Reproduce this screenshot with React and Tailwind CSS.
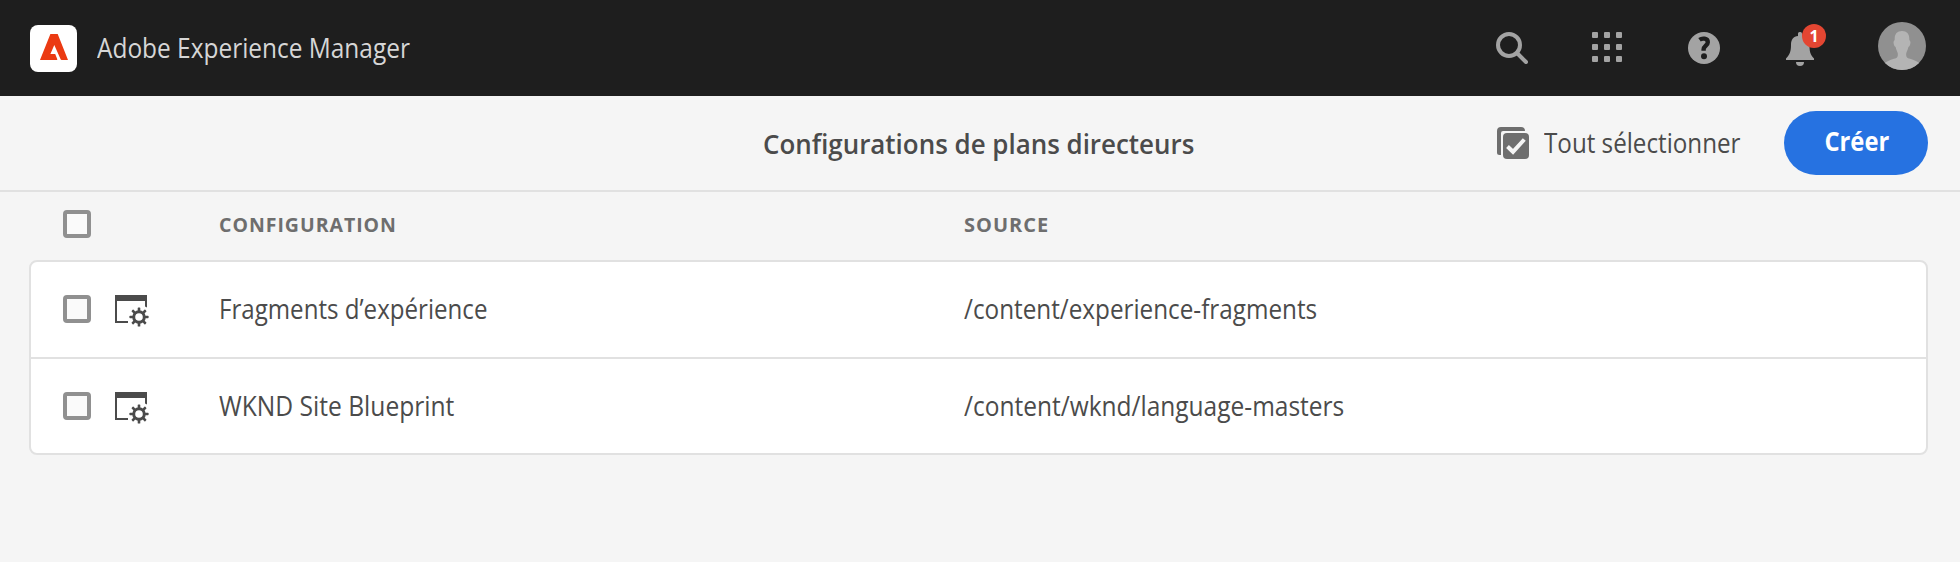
const rows = [
  { name: 'Fragments d’expérience', nameScale: 'scale-x-[0.893]', source: '/content/experience-fragments', sourceScale: 'scale-x-[0.899]' },
  { name: 'WKND Site Blueprint', nameScale: 'scale-x-[0.911]', source: '/content/wknd/language-masters', sourceScale: 'scale-x-[0.907]' },
];

function AdobeLogo() {
  return (
    <div className="flex h-[47px] w-[47px] shrink-0 items-center justify-center rounded-lg bg-white">
      <svg width="28" height="26" viewBox="0 0 28 26" fill="#eb3a12" className="-translate-y-px">
        <path d="M10.4 0h7.3L28 26h-6.3c-.6 0-.9-.2-1.1-.7L14.3 10.9 10.4 20h4.8l2.1 5.3c.1.4 0 .7-.5.7H0Z" />
      </svg>
    </div>
  );
}

function SearchIcon() {
  return (
    <svg width="32" height="32" viewBox="0 0 32 32" fill="none" stroke="#a3a3a3">
      <circle cx="13" cy="13" r="11" strokeWidth="4" />
      <path d="M21 21l9 9" strokeWidth="4" strokeLinecap="round" />
    </svg>
  );
}

function AppsIcon() {
  return (
    <svg width="30" height="30" viewBox="0 0 30 30" fill="#a3a3a3">
      {[0, 12, 24].map((y) => [0, 12, 24].map((x) => <rect key={`${x}-${y}`} x={x} y={y} width="6" height="6" rx="1" />))}
    </svg>
  );
}

function HelpIcon() {
  return (
    <svg width="32" height="32" viewBox="0 0 32 32">
      <circle cx="16" cy="16" r="16" fill="#a3a3a3" />
      <path d="M11.500 7.700C14 6 19.800 5.900 19.800 10.200c0 3.300-4.200 3.600-4.200 7.300v1.200" fill="none" stroke="#1e1e1e" strokeWidth="4.400" />
      <circle cx="16" cy="24.200" r="3" fill="#1e1e1e" />
    </svg>
  );
}

function BellIcon() {
  return (
    <svg width="28" height="34" viewBox="0 0 28 34" fill="#a3a3a3">
      <path d="M12 4V1.500A1.500 1.500 0 0 1 13.500 0h1A1.500 1.500 0 0 1 16 1.500V4c4.500.5 7.500 3.500 7.500 8.500 0 7 .5 9.500 4.500 14V28H0v-1.500c4-4.500 5-7 5-14C5 7.500 7.500 4.500 12 4Z" />
      <path d="M10 30h8a4 4 0 0 1-8 0Z" />
    </svg>
  );
}

function Avatar() {
  return (
    <svg width="48" height="48" viewBox="0 0 48 48">
      <defs><clipPath id="avatar"><circle cx="24" cy="24" r="24" /></clipPath></defs>
      <g clipPath="url(#avatar)">
        <rect width="48" height="48" fill="#909090" />
        <path d="M24 9c-5 0-7.500 3-7.300 8.500-.1 1.200-1.500 1.600-1.100 3.700.4 2.200 1 3 2 3.700.6 3.200 1.900 4.700 2.200 6.500.2 1.800 0 3.600-1.400 4.600C15.500 37 11 38 6 41.500v8h36v-8c-5-3.500-9.500-4.500-12.400-5.500-1.400-1-1.600-2.800-1.400-4.600.3-1.800 1.600-3.300 2.200-6.500 1-.7 1.600-1.500 2-3.700.4-2.100-1-2.500-1.100-3.700C31.500 12 29 9 24 9Z" fill="#b4b4b4" />
      </g>
    </svg>
  );
}

function SelectAllIcon() {
  return (
    <svg width="32" height="32" viewBox="0 0 32 32" fill="#6e6e6e">
      <path d="M4 28H2.500A2.500 2.500 0 0 1 0 25.500V4a4 4 0 0 1 4-4h20a4 4 0 0 1 4 4H6a2 2 0 0 0-2 2Z" />
      <rect x="6" y="6" width="26" height="26" rx="4" />
      <path d="M10.500 19.500l5.500 5.300L27.300 12.500" fill="none" stroke="#f5f5f5" strokeWidth="4" />
    </svg>
  );
}

function BlueprintIcon() {
  return (
    <svg width="34" height="32" viewBox="0 0 34 32" fill="#4b4b4b">
      <path d="M0 0h32v12.500l-2-1V6H2v20h11v2H0Z" />
      <circle cx="24" cy="22" r="5.300" fill="none" stroke="#4b4b4b" strokeWidth="3" />
      {[0, 45, 90, 135, 180, 225, 270, 315].map((a) => (
        <rect key={a} x="22.700" y="12.400" width="2.600" height="4" rx="0.700" transform={`rotate(${a} 24 22)`} />
      ))}
    </svg>
  );
}

function Checkbox() {
  return <span role="checkbox" aria-checked="false" className="block h-7 w-7 shrink-0 rounded border-4 border-[#909090] bg-[#fafafa]" />;
}

export default function App() {
  return (
    <div className="h-[562px] w-[1960px] overflow-hidden bg-[#f5f5f5] font-['Open_Sans',sans-serif] text-[27px] leading-9 whitespace-nowrap text-[#4b4b4b]">
      <header className="flex h-24 items-center justify-between bg-[#1e1e1e] pr-[34px] pl-[30px]">
        <div className="flex items-center gap-[20px]">
          <AdobeLogo />
          <span className="origin-left scale-x-[0.905] text-[#d6d6d6]">Adobe Experience Manager</span>
        </div>
        <div className="flex h-24 items-start">
          <div className="mt-8 mr-16"><SearchIcon /></div>
          <div className="mt-8 mr-[66px]"><AppsIcon /></div>
          <div className="mt-8 mr-[66px]"><HelpIcon /></div>
          <div className="relative mt-8 mr-16">
            <BellIcon />
            <span className="absolute -top-2 left-4 flex h-6 w-6 items-center justify-center rounded-full bg-[#e34632] text-[16px] leading-6 font-bold text-white">1</span>
          </div>
          <div className="mt-[22px]"><Avatar /></div>
        </div>
      </header>

      <div className="grid h-24 grid-cols-[1fr_434px_1fr] items-center border-b-2 border-[#e1e1e1] pr-8 pl-8">
        <div />
        <h1 className="mt-px origin-left scale-x-[0.96] font-semibold">Configurations de plans directeurs</h1>
        <div className="flex items-center justify-end">
          <SelectAllIcon />
          <span className="ml-[15px] w-60"><span className="inline-block origin-left scale-x-[0.896]">Tout sélectionner</span></span>
          <button className="flex h-16 w-36 items-center justify-center rounded-full bg-[#2672e1] pb-1 pl-0.5 font-bold text-white">
            <span className="scale-x-[0.88]">Créer</span>
          </button>
        </div>
      </div>

      <main className="pr-8 pl-[29px]">
        <div className="flex h-[68px] items-start pt-[18px] pl-[34px] text-xl leading-7 font-bold text-[#6e6e6e]">
          <div className="w-[156px]"><Checkbox /></div>
          <div className="mt-px w-[745px]"><span className="inline-block origin-left scale-x-[0.975] tracking-[1px]">CONFIGURATION</span></div>
          <div className="mt-px tracking-[1px]">SOURCE</div>
        </div>
        <div className="rounded-lg border-2 border-[#e1e1e1] bg-white">
          {rows.map((row) => (
            <div key={row.name} className="flex h-[97px] items-start border-b-2 border-[#e1e1e1] pt-[33px] pl-8 last:h-[94px] last:border-b-0">
              <Checkbox />
              <div className="ml-6 w-[104px]"><BlueprintIcon /></div>
              <div className="-mt-1 w-[745px]"><span className={`inline-block origin-left ${row.nameScale}`}>{row.name}</span></div>
              <span className={`-mt-1 origin-left ${row.sourceScale}`}>{row.source}</span>
            </div>
          ))}
        </div>
      </main>
    </div>
  );
}
